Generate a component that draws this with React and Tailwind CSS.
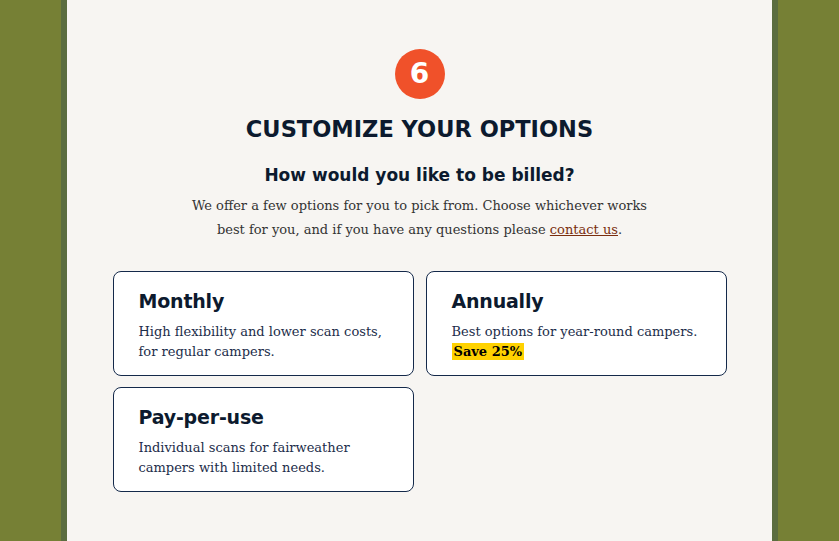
const sans = "font-['DejaVu_Sans',sans-serif]";
const serif = "font-['DejaVu_Serif',serif]";

const options = [
  {
    title: "Monthly",
    text: "High flexibility and lower scan costs, for regular campers.",
  },
  {
    title: "Annually",
    text: "Best options for year-round campers.",
    badge: "Save 25%",
  },
  {
    title: "Pay-per-use",
    text: "Individual scans for fairweather campers with limited needs.",
  },
];

function OptionCard({ title, text, badge }) {
  return (
    <button className="text-left bg-white border border-[#14294a] rounded-lg h-[105px] pl-[25px] pr-6 pt-[17px] flex flex-col justify-start">
      <h3 className={`${sans} font-bold text-[19px] leading-6 text-[#0c1a2e] tracking-[-0.2px]`}>
        {title}
      </h3>
      <p className={`${serif} mt-[9px] text-[13px] leading-5 text-[#1c2d4a] max-w-[250px]`}>
        {text}
        {badge && (
          <>
            <br />
            <span className="bg-[#ffd200] text-black font-bold px-[2px] py-[1px]">{badge}</span>
          </>
        )}
      </p>
    </button>
  );
}

export default function App() {
  return (
    <div className="min-h-[541px] bg-[#768035] flex justify-center">
      <div className="w-[717px] border-x-[6px] border-[#5b6d40] bg-[#f7f5f2] flex flex-col items-center pt-[49px]">
        <div className={`${sans} w-[50px] h-[50px] rounded-full bg-[#f0512a] text-white font-bold text-[28px] flex items-center justify-center`}>
          6
        </div>
        <h1 className={`${sans} mt-[16px] font-bold text-[22.5px] leading-7 text-[#0c1a2e]`}>
          CUSTOMIZE YOUR OPTIONS
        </h1>
        <h2 className={`${sans} mt-[20px] font-bold text-[17px] leading-6 text-[#0c1a2e]`}>
          How would you like to be billed?
        </h2>
        <p className={`${serif} mt-[7px] w-[460px] text-center text-[13px] leading-6 text-[#333333]`}>
          We offer a few options for you to pick from. Choose whichever works best for you, and if you have any questions please{" "}
          <a href="#" className="underline text-[#7a2e0e]">contact us</a>.
        </p>
        <div className="mt-[29px] w-[614px] grid grid-cols-2 gap-x-3 gap-y-[11px]">
          {options.map((o) => (
            <OptionCard key={o.title} {...o} />
          ))}
        </div>
      </div>
    </div>
  );
}
